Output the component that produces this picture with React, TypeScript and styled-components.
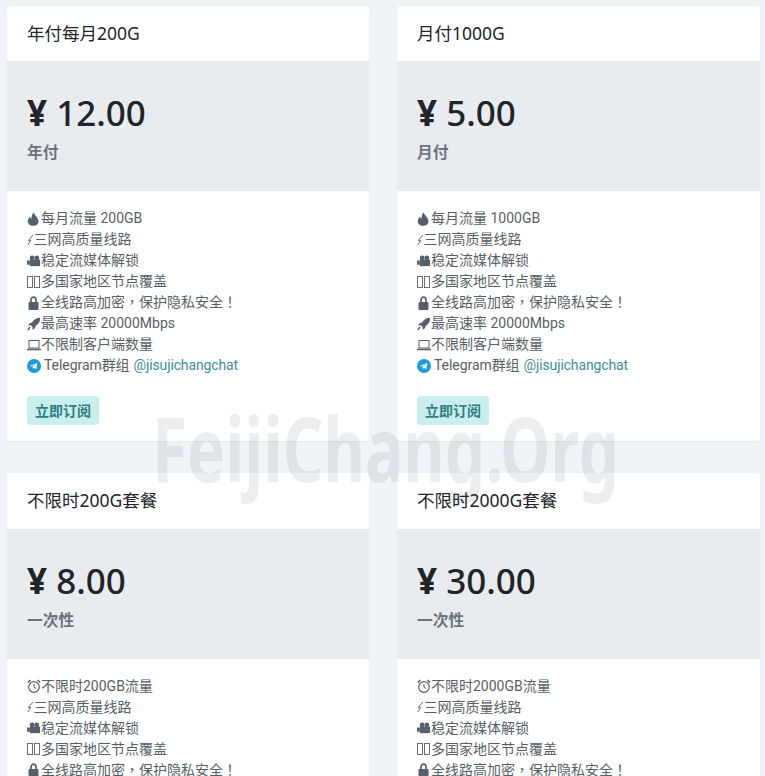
import styled, { createGlobalStyle } from "styled-components";

const GlobalStyle = createGlobalStyle`
  html, body {
    margin: 0;
    height: 776px;
    overflow: hidden;
    background: #f0f3f8;
  }
  body {
    font-family: Roboto, "Noto Sans CJK SC", sans-serif;
    font-size: 14px;
    line-height: 21px;
    color: #575f66;
  }
`;

const Page = styled.div`
  position: relative;
  height: 776px;
  overflow: hidden;
  padding: 5.75px 5px 0 7px;
  box-sizing: border-box;
`;

const Grid = styled.div`
  display: grid;
  grid-template-columns: 362px 363px;
  column-gap: 28px;
  row-gap: 32px;
`;

const Card = styled.div`
  background: #fff;
  border-radius: 4px;
  box-shadow: 0 1px 2px rgba(0, 0, 0, 0.04);
  overflow: hidden;
`;

const CardTitle = styled.div`
  height: 55.5px;
  padding: 0 20px 1px;
  box-sizing: border-box;
  display: flex;
  align-items: center;
  font-family: "Noto Sans", "Noto Sans CJK SC", sans-serif;
  font-size: 17.5px;
  color: #212529;
`;

const PriceBox = styled.div`
  height: 130px;
  padding: 30px 20px 0;
  box-sizing: border-box;
  background: #e9ecef;
`;

const Price = styled.div`
  font-family: "Noto Sans", "Noto Sans CJK SC", sans-serif;
  font-size: 35px;
  line-height: 44px;
  font-weight: 500;
  color: #212529;
`;

const Yen = styled.span`
  font-weight: 700;
`;

const Period = styled.div`
  margin-top: 6px;
  font-size: 15.75px;
  line-height: 24px;
  font-weight: 700;
  color: #6c757d;
`;

const Body = styled.div`
  height: 250px;
  padding: 16.75px 20px 0;
  box-sizing: border-box;
`;

const Feature = styled.div`
  display: flex;
  align-items: center;
  height: 21px;
  white-space: nowrap;
`;

const IconSlot = styled.span<{ $w: number }>`
  display: inline-flex;
  align-items: center;
  width: ${(p) => p.$w}px;
  flex: none;
`;

const Tofu = styled.span`
  display: inline-block;
  width: 6px;
  height: 12px;
  margin-right: 1px;
  border: 1px solid #66707a;
  box-sizing: border-box;
`;

const Punct = styled.span`
  font-family: "Noto Sans CJK TC", sans-serif;
  line-height: 0;
`;

const Telegram = styled.span`
  letter-spacing: -0.06px;
`;

const Handle = styled.span`
  margin-left: 4px;
  letter-spacing: -0.13px;
  color: #3d8f98;
`;

const SubscribeButton = styled.button`
  display: block;
  margin-top: 20px;
  width: 72px;
  height: 29px;
  padding: 1px 0 0;
  border: 0;
  border-radius: 4px;
  background: #c8eeee;
  color: #2f7f82;
  font: 700 14px/21px Roboto, "Noto Sans CJK SC", sans-serif;
`;

const Watermark = styled.div`
  position: absolute;
  left: 152px;
  top: 387px;
  font-family: "Noto Sans", sans-serif;
  font-size: 90px;
  line-height: 120px;
  font-weight: 700;
  color: rgba(30, 30, 40, 0.08);
  white-space: nowrap;
  pointer-events: none;
  transform: scaleX(0.71);
  transform-origin: left center;
`;

const Drop = () => (
  <svg width="12" height="14" viewBox="0 0 12 14">
    <path d="M6.500 0.300C7 3 11.500 5.500 11.500 9.500C11.500 12.200 9 13.800 6 13.800C3 13.800 0.800 12 0.800 9.300C0.800 7.500 1.800 6 3 4.500C3.300 5.800 3.800 6.500 4.500 6.800C4.500 4.500 5.200 2 6.500 0.300Z" fill="#56606a" />
  </svg>
);

const Bolt = () => (
  <svg width="7" height="14" viewBox="0 0 7 14">
    <path d="M6.500 1.500L1.500 7.500H4L0.800 12.500" fill="none" stroke="#56606a" strokeWidth="1" />
  </svg>
);

const Camera = () => (
  <svg width="15" height="12" viewBox="0 0 15 12">
    <circle cx="5.500" cy="2.700" r="2.600" fill="#56606a" />
    <circle cx="10.500" cy="2.700" r="2.600" fill="#56606a" />
    <rect x="3" y="4.500" width="11" height="7" fill="#56606a" />
    <rect x="0" y="5.500" width="3" height="4.500" fill="#56606a" />
  </svg>
);

const Lock = () => (
  <svg width="13" height="14" viewBox="0 0 13 14">
    <path d="M4 6.500V4.200C4 2.400 5.200 1.200 6.500 1.200C7.800 1.200 9 2.400 9 4.200V6.500" fill="none" stroke="#56606a" strokeWidth="1.700" />
    <rect x="1.500" y="6" width="10" height="8" rx="1" fill="#56606a" />
  </svg>
);

const Rocket = () => (
  <svg width="14" height="14" viewBox="0 0 14 14">
    <path d="M13 0.800C9.500 0.800 7 2.500 5 5.500L2.800 6L1 8.500L3.800 8.300L5.700 10.300L5.500 13L8 11.200L8.500 9C11.500 7.300 13.500 4.500 13 0.800Z" fill="#56606a" />
    <path d="M3 10L0.800 13.200" stroke="#56606a" strokeWidth="1.400" />
  </svg>
);

const Laptop = () => (
  <svg width="14" height="12" viewBox="0 0 14 12">
    <rect x="2" y="1.500" width="10" height="7.500" fill="none" stroke="#56606a" strokeWidth="1" />
    <path d="M0 10.500H14" stroke="#56606a" strokeWidth="1.400" />
  </svg>
);

const Clock = () => (
  <svg width="14" height="14" viewBox="0 0 14 14">
    <circle cx="7" cy="8" r="5.300" fill="none" stroke="#56606a" strokeWidth="1.200" />
    <path d="M7 5V8.300L9 9.500" fill="none" stroke="#56606a" strokeWidth="1" />
    <path d="M0.800 3.500L3.500 1M13.200 3.500L10.500 1" stroke="#56606a" strokeWidth="1.600" />
  </svg>
);

const TelegramIcon = () => (
  <svg width="14" height="14" viewBox="0 0 14 14">
    <circle cx="7" cy="7" r="7" fill="#1d9bdb" />
    <path d="M2.800 6.900L10.400 3.900L9.200 10.300L7 8.800L5.800 9.900L5.600 8.100L9 5.200L4.800 7.600Z" fill="#fff" />
  </svg>
);

const features = (first: { icon: "drop" | "clock"; text: string }) => [
  { key: "first", icon: first.icon === "drop" ? <Drop /> : <Clock />, w: 14, text: first.text },
  { key: "line", icon: <Bolt />, w: 6.5, text: "三网高质量线路" },
  { key: "media", icon: <Camera />, w: 14, text: "稳定流媒体解锁" },
  {
    key: "nodes",
    icon: (
      <>
        <Tofu />
        <Tofu />
      </>
    ),
    w: 14,
    text: "多国家地区节点覆盖",
  },
  {
    key: "secure",
    icon: <Lock />,
    w: 14,
    text: (
      <span>
        全线路高加密<Punct>，</Punct>保护隐私安全<Punct>！</Punct>
      </span>
    ),
  },
  { key: "speed", icon: <Rocket />, w: 14, text: "最高速率 20000Mbps" },
  { key: "client", icon: <Laptop />, w: 14, text: "不限制客户端数量" },
];

const plans = [
  { title: "年付每月200G", price: "12.00", period: "年付", first: { icon: "drop" as const, text: "每月流量 200GB" } },
  { title: "月付1000G", price: "5.00", period: "月付", first: { icon: "drop" as const, text: "每月流量 1000GB" } },
  { title: "不限时200G套餐", price: "8.00", period: "一次性", first: { icon: "clock" as const, text: "不限时200GB流量" } },
  { title: "不限时2000G套餐", price: "30.00", period: "一次性", first: { icon: "clock" as const, text: "不限时2000GB流量" } },
];

export default function App() {
  return (
    <Page>
      <GlobalStyle />
      <Grid>
        {plans.map((plan) => (
          <Card key={plan.title}>
            <CardTitle>{plan.title}</CardTitle>
            <PriceBox>
              <Price>
                <Yen>¥</Yen> {plan.price}
              </Price>
              <Period>{plan.period}</Period>
            </PriceBox>
            <Body>
              {features(plan.first).map((f) => (
                <Feature key={f.key}>
                  <IconSlot $w={f.w}>{f.icon}</IconSlot>
                  {f.text}
                </Feature>
              ))}
              <Feature>
                <IconSlot $w={17}>
                  <TelegramIcon />
                </IconSlot>
                <Telegram>Telegram群组</Telegram>
                <Handle>@jisujichangchat</Handle>
              </Feature>
              <SubscribeButton>立即订阅</SubscribeButton>
            </Body>
          </Card>
        ))}
      </Grid>
      <Watermark>FeijiChang.Org</Watermark>
    </Page>
  );
}
